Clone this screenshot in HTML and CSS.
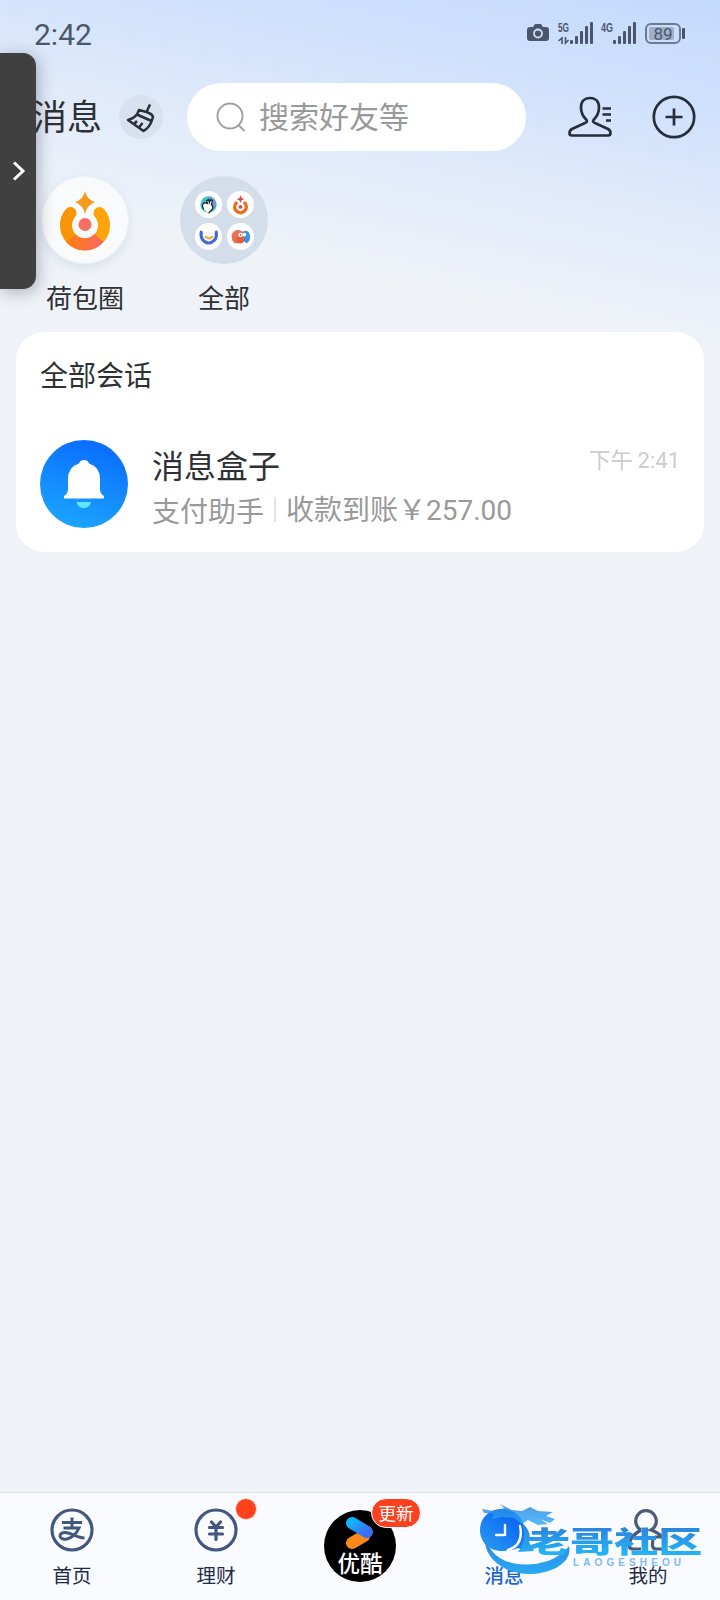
FILE: index.html
```html
<!DOCTYPE html>
<html lang="zh-CN">
<head>
    <meta charset="UTF-8">
    <meta name="viewport" content="width=device-width, initial-scale=1.0">
    <title>消息</title>
    <link rel="stylesheet" href="styles.css">
</head>
<body>
    <div class="status-bar">
        <span class="clock">2:42</span>
        <svg class="status-icons" width="160" height="24" viewBox="0 0 160 24">
            <g fill="#4a566b">
                <path d="M3 5h3l2-3h6l2 3h3q3 0 3 3v8q0 3-3 3H3q-3 0-3-3V8q0-3 3-3z"/>
                <rect x="43" y="18" width="3" height="4" rx="1"/>
                <rect x="48" y="14" width="3" height="8" rx="1"/>
                <rect x="53" y="9" width="3" height="13" rx="1"/>
                <rect x="58" y="4" width="3" height="18" rx="1"/>
                <rect x="63" y="0" width="3" height="22" rx="1"/>
                <rect x="86" y="18" width="3" height="4" rx="1"/>
                <rect x="91" y="14" width="3" height="8" rx="1"/>
                <rect x="96" y="9" width="3" height="13" rx="1"/>
                <rect x="101" y="4" width="3" height="18" rx="1"/>
                <rect x="106" y="0" width="3" height="22" rx="1"/>
                <rect x="155" y="6" width="3" height="11" rx="1"/>
            </g>
            <circle cx="11" cy="11.500" r="4" fill="none" stroke="#cfe0fb" stroke-width="1.800"/>
            <path d="M35 22v-6l-3.500 3M38.500 15v6l3-3" fill="none" stroke="#4a566b" stroke-width="1.600"/>
            <rect x="119" y="2" width="34" height="19" rx="5" fill="none" stroke="#6d7a90" stroke-width="2"/>
            <rect x="122" y="5" width="25" height="13" rx="2" fill="#9fb0ca"/>
            <text class="net" x="31" y="10" textLength="11" lengthAdjust="spacingAndGlyphs">5G</text>
            <text class="net" x="74" y="10" textLength="12" lengthAdjust="spacingAndGlyphs">4G</text>
            <text class="level" x="136" y="17.500" text-anchor="middle">89</text>
        </svg>
    </div>

    <header class="header">
        <h1>消息</h1>
        <div class="clean">
            <svg width="44" height="44" viewBox="0 0 44 44" fill="none" stroke="#2b2e35" stroke-width="2.500" stroke-linejoin="round">
                <path d="M31 9.500L27.500 17M20 15L27.500 17Q33.500 19 34 22L32.500 26L18 19.500z"/>
                <path d="M18 19.500Q14 24 9 25L24.500 36Q31 32 32.500 26M15 29l3-3M20 32.500l3.500-4.500"/>
            </svg>
        </div>
        <div class="search">
            <svg width="32" height="32" viewBox="0 0 32 32" fill="none" stroke="#a0a0a0" stroke-width="2">
                <circle cx="15" cy="15" r="12.500"/>
                <path d="M23.500 24l6 6"/>
            </svg>
            <span>搜索好友等</span>
        </div>
        <svg class="contacts" width="44" height="42" viewBox="0 0 44 42" fill="none" stroke="#262d3b" stroke-width="2.700">
            <path d="M18.500 24C15 20.500 13 17 13 11.500C13 5.500 16.500 2 22 2S31 5.500 31 11.500C31 17 29 20.500 25.500 24Q24 26 27 27L40 33Q42.500 34.500 42.500 37Q42.500 39.500 40 39.500H4Q1.500 39.500 1.500 37Q1.500 34.500 4 33L17 27Q20 26 18.500 24z"/>
            <path d="M34.500 12.500h8.500M34.500 18.500h8.500M38 24.500h5"/>
        </svg>
        <svg class="add" width="44" height="44" viewBox="0 0 44 44" fill="none" stroke="#262d3b" stroke-width="2.700">
            <circle cx="22" cy="22" r="20.200"/>
            <path d="M13.500 22h17M22 13.500v17"/>
        </svg>
    </header>

    <nav class="apps">
        <div class="app">
            <div class="app-icon">
                <svg width="86" height="86" viewBox="0 0 86 86">
                    <defs>
                        <linearGradient id="orange" x1="0" y1="0" x2="1" y2="0">
                            <stop offset="0" stop-color="#f89406"/>
                            <stop offset="1" stop-color="#ffa50a"/>
                        </linearGradient>
                        <linearGradient id="coral" x1="0" y1="0" x2="1" y2="0">
                            <stop offset="0" stop-color="#ff7d14"/>
                            <stop offset="1" stop-color="#f96a5c"/>
                        </linearGradient>
                    </defs>
                    <path d="M28.500 36A19 19 0 1 0 57.500 36" fill="none" stroke="url(#orange)" stroke-width="12" stroke-linecap="round"/>
                    <path d="M28.500 61A19 19 0 0 0 57 61" fill="none" stroke="url(#coral)" stroke-width="12"/>
                    <path d="M43 14Q45 23 53 25Q45 28 43 37Q41 28 33 25Q41 23 43 14z" fill="#f79a1a"/>
                    <circle cx="43" cy="47.500" r="6.500" fill="#f96e62"/>
                </svg>
            </div>
            <span>荷包圈</span>
        </div>
        <div class="app">
            <div class="app-icon all">
                <div class="mini">
                    <svg viewBox="0 0 28 28">
                        <circle cx="14" cy="14" r="8.500" fill="#3fc5bd"/>
                        <path d="M14 6A8.500 8.500 0 0 1 22 14L19 20z" fill="#7893cf"/>
                        <path d="M9 19q-3-5 1-7l3 1l-1-3l2-1l1 3l1-3l2 1l-1 4q3 3 0 6l-3 3" fill="#fff" stroke="#182632" stroke-width="1.300"/>
                    </svg>
                </div>
                <div class="mini">
                    <svg viewBox="0 0 28 28">
                        <path d="M9.500 12.500A6 6 0 1 0 18.500 12.500" fill="none" stroke="#e86e25" stroke-width="3.600" stroke-linecap="round"/>
                        <path d="M14 4.500L15.200 7.300L18 8.500L15.200 9.700L14 12.500L12.800 9.700L10 8.500L12.800 7.300z" fill="#d94d45"/>
                        <circle cx="14" cy="16.500" r="2" fill="#d84d40"/>
                    </svg>
                </div>
                <div class="mini">
                    <svg viewBox="0 0 28 28" fill="none" stroke-linecap="round">
                        <path d="M6.500 9.500Q5.500 14 8 17.500Q14 24 20.500 17.500Q23 14 22 9.500" stroke="#426bd4" stroke-width="3.200"/>
                        <path d="M11 14.500q3.500 3 7 0" stroke="#edae3d" stroke-width="2.400"/>
                    </svg>
                </div>
                <div class="mini">
                    <svg viewBox="0 0 28 28">
                        <path d="M15 21H8Q4 18 5 12Q8 5.500 15 8L18 12z" fill="#e77157"/>
                        <path d="M16 9Q22 6 24 13Q24 20 20 21L16 17z" fill="#3e91d8"/>
                        <circle cx="14" cy="17" r="4" fill="#e45e43"/>
                        <circle cx="14" cy="12.500" r="2.300" fill="#fff"/>
                        <circle cx="18" cy="12" r="2" fill="#fff"/>
                        <circle cx="14" cy="12.500" r="1" fill="#ca5850"/>
                    </svg>
                </div>
            </div>
            <span>全部</span>
        </div>
    </nav>

    <main class="card">
        <h2>全部会话</h2>
        <div class="chat">
            <svg class="avatar" width="88" height="88" viewBox="0 0 88 88">
                <defs>
                    <linearGradient id="blue" x1="0.650" y1="0" x2="0.350" y2="1">
                        <stop offset="0" stop-color="#0a6cff"/>
                        <stop offset="1" stop-color="#1ba5ff"/>
                    </linearGradient>
                </defs>
                <circle cx="44" cy="44" r="44" fill="url(#blue)"/>
                <path d="M36.500 62h14.500a7.300 7 0 0 1-14.500 0z" fill="#5ee7ff"/>
                <path d="M24 56Q28 54 28 49V39Q28 27 39 23.500Q40 20 44 20T49 23.500Q60 27 60 39V49Q60 54 64 56V58.500H24z" fill="#fff"/>
            </svg>
            <div class="chat-text">
                <h3>消息盒子</h3>
                <p><span>支付助手</span><i class="divider"></i><span>收款到账￥<span class="num">257.00</span></span></p>
            </div>
            <time>下午 <span class="num">2:41</span></time>
        </div>
    </main>

    <footer class="tab-bar">
        <div class="tab">
            <svg width="44" height="44" viewBox="0 0 44 44" fill="none" stroke="#42577f">
                <circle cx="22" cy="22" r="20" stroke-width="3.200"/>
                <path d="M12 14.500h20M22 9.500v10M13.500 20H29Q25 29 17 31C8 32.500 8 24 15.500 24.500C22 25 27 30 34.500 30" stroke-width="3"/>
            </svg>
            <span>首页</span>
        </div>
        <div class="tab">
            <svg width="44" height="44" viewBox="0 0 44 44" fill="none" stroke="#42577f">
                <circle cx="22" cy="22" r="20" stroke-width="3.200"/>
                <path d="M17.500 14l4.500 5l4.500-5M15.500 19.500h13M15.500 26h13M22 19v12.500" stroke-width="3.200" stroke-linecap="round"/>
            </svg>
            <span>理财</span>
            <i class="dot"></i>
        </div>
        <div class="tab">
            <div class="youku">
                <svg width="30" height="34" viewBox="0 0 30 34" fill="none" stroke-width="12" stroke-linecap="round">
                    <defs>
                        <linearGradient id="play" x1="0" y1="0" x2="1" y2="1">
                            <stop offset="0" stop-color="#14b0fb"/>
                            <stop offset="1" stop-color="#3c6cf4"/>
                        </linearGradient>
                    </defs>
                    <path d="M7 27L19 20" stroke="#fb8918"/>
                    <path d="M7 7L22 16" stroke="url(#play)"/>
                </svg>
                <b>优酷</b>
            </div>
            <em class="badge">更新</em>
        </div>
        <div class="tab active">
            <svg width="48" height="44" viewBox="0 0 48 44">
                <defs>
                    <linearGradient id="bubble" x1="1" y1="0" x2="0" y2="1">
                        <stop offset="0.300" stop-color="#0d6af3"/>
                        <stop offset="1" stop-color="#2b9ff0"/>
                    </linearGradient>
                </defs>
                <path d="M22 1C35 1 44 10 44 22Q45 30 48 39Q44 43 38 40Q31 43 22 43C9 43 0 34 0 22S9 1 22 1z" fill="url(#bubble)"/>
            </svg>
            <span>消息</span>
        </div>
        <div class="tab">
            <svg width="44" height="44" viewBox="0 0 44 44" fill="none" stroke="#4b5a78" stroke-width="3.200">
                <path d="M15 22A10.300 10.300 0 1 1 25 22Q33 25 36 29M15 22Q4 28 3 37Q3 41 7 41H15M29 29h9M27 32Q25 41 30 41H37"/>
            </svg>
            <span>我的</span>
        </div>

        <div class="watermark">
            <svg width="100" height="82" viewBox="0 0 100 82">
                <defs>
                    <linearGradient id="dragon" x1="0" y1="0" x2="0" y2="1">
                        <stop offset="0" stop-color="#2b83e6"/>
                        <stop offset="1" stop-color="#28a9f2"/>
                    </linearGradient>
                </defs>
                <g fill="url(#dragon)">
                    <path d="M2 10L14 12L24 9L20 5L32 11L42 12L50 8L58 12L73 13L66 17L75 20L70 24L60 20L68 25L58 26L48 21L42 25L34 19L22 18L12 20L14 15L4 14z" opacity="0.800"/>
                    <path d="M5 34Q8 58 32 64Q50 68 68 62Q83 56 89 47Q92 60 76 69Q52 80 28 71Q2 59 5 34z"/>
                    <path d="M42 24Q52 32 49 43L54 52L38 53Q47 42 42 24z"/>
                </g>
                <path d="M16 36h7M25 26v10M28 51Q44 46 40 27" fill="none" stroke="#fff" stroke-width="2.400" stroke-linecap="round"/>
            </svg>
            <strong>老哥社区</strong>
            <small>LAOGESHEOU</small>
        </div>
    </footer>

    <aside class="drawer">
        <svg width="14" height="22" viewBox="0 0 14 22" fill="none" stroke="#fff" stroke-width="3">
            <path d="M2 2.500l9 8.500l-9 8.500"/>
        </svg>
    </aside>
</body>
</html>
```
FILE: styles.css
```css
* {
    box-sizing: border-box;
}
body {
    position: relative;
    display: flex;
    flex-direction: column;
    margin: 0;
    height: 1600px;
    overflow: hidden;
    font-family: "Noto Sans CJK SC", sans-serif;
    font-weight: 400;
    color: #2e3034;
    background: linear-gradient(192deg, #c4dafc 0, #d0e1fc 110px, #e2ebfa 235px, #eff3f8 345px);
}
h1, h2, h3, p {
    margin: 0;
    font-weight: inherit;
}
svg {
    display: block;
    flex: none;
}
.status-bar {
    display: flex;
    justify-content: space-between;
    align-items: center;
    height: 68px;
    padding: 0 33px 0 34px;
}
.clock {
    font-family: Roboto, sans-serif;
    font-size: 30px;
    color: #4b586c;
}
.num {
    font-family: Roboto, sans-serif;
}
.net {
    font: bold 12px "Liberation Sans", sans-serif;
    fill: #4a566b;
}
.level {
    font: 17px Roboto, sans-serif;
    fill: #4a566b;
}
.header {
    display: flex;
    align-items: center;
    height: 98px;
    padding: 0 24px 0 32px;
}
h1 {
    width: 87px;
    padding-bottom: 5px;
    font-size: 35px;
    line-height: 50px;
}
.clean {
    width: 44px;
    height: 44px;
    border-radius: 50%;
    background: #d7e1ef;
}
.search {
    display: flex;
    align-items: center;
    gap: 12px;
    width: 339px;
    height: 68px;
    margin-left: 24px;
    padding-left: 28px;
    border-radius: 34px;
    background: #fff;
    color: #999;
    font-size: 30px;
    line-height: 44px;
}
.search span {
    padding-bottom: 4px;
}
.contacts {
    margin-left: 42px;
}
.add {
    margin-left: auto;
}
.apps {
    display: flex;
    gap: 51px;
    height: 166px;
    padding: 10px 0 0 41px;
}
.app {
    display: flex;
    flex-direction: column;
    align-items: center;
    gap: 14px;
    width: 88px;
    font-size: 26px;
    line-height: 38px;
}
.app-icon {
    width: 88px;
    height: 88px;
    border: 1px solid #eef3f9;
    border-radius: 50%;
    background: #f8fafc;
    box-shadow: 0 4px 10px rgba(100, 125, 160, 0.15);
}
.all {
    display: grid;
    grid-template-columns: 27px 27px;
    gap: 5px;
    place-content: center;
    border: none;
    background: #d4deea;
    box-shadow: none;
}
.mini {
    border-radius: 50%;
    background: #fff;
}
.card {
    width: 688px;
    height: 220px;
    margin: 0 16px;
    padding: 21px 24px 0;
    border-radius: 28px;
    background: #fff;
}
h2 {
    font-size: 28px;
    line-height: 42px;
}
.chat {
    display: flex;
    margin-top: 45px;
}
.chat-text {
    margin-left: 24px;
    padding-top: 2px;
}
h3 {
    font-size: 32px;
    line-height: 44px;
}
.chat p {
    display: flex;
    align-items: center;
    font-size: 28px;
    line-height: 44px;
    color: #999;
}
.divider {
    width: 2px;
    height: 25px;
    margin: 0 10px;
    background: #e3e3e3;
}
.chat time {
    margin-left: auto;
    padding-top: 2px;
    font-size: 22px;
    line-height: 32px;
    color: #ccc;
}
.tab-bar {
    position: relative;
    display: grid;
    grid-template-columns: repeat(5, 144px);
    height: 108px;
    margin-top: auto;
    border-top: 1px solid #dfe3e9;
    background: #f9fbff;
}
.tab {
    position: relative;
    display: flex;
    flex-direction: column;
    align-items: center;
    gap: 9px;
    padding-top: 15px;
    font-size: 19.5px;
    line-height: 28px;
    color: #1f2b47;
}
.active {
    color: #1c65d5;
    font-weight: 500;
}
.dot {
    position: absolute;
    top: 5px;
    left: 91px;
    width: 22px;
    height: 22px;
    border: 1px solid #ffded8;
    border-radius: 50%;
    background: #ff411c;
}
.youku {
    display: flex;
    flex-direction: column;
    align-items: center;
    width: 72px;
    height: 72px;
    margin-top: 2px;
    padding: 6px 0 0 0;
    border-radius: 50%;
    background: #000;
    color: #fff;
}
.youku b {
    font-size: 22.5px;
    font-weight: 500;
    line-height: 24px;
}
.badge {
    position: absolute;
    top: 5px;
    left: 83px;
    width: 50px;
    height: 30px;
    border: 1px solid #fff;
    border-radius: 15px;
    background: #fc4121;
    color: #fff;
    font-size: 17.5px;
    font-style: normal;
    line-height: 27px;
    text-align: center;
}
/* community stamp over the last two tabs */
.watermark {
    position: absolute;
    left: 480px;
    top: 6px;
    width: 240px;
    height: 82px;
}
.watermark strong {
    position: absolute;
    left: 46px;
    top: 23px;
    font-size: 29px;
    font-weight: 900;
    line-height: 36px;
    white-space: nowrap;
    transform: scaleX(1.52);
    transform-origin: left;
    background: linear-gradient(#2d83dc 15%, #22b2f5 85%);
    -webkit-background-clip: text;
    background-clip: text;
    color: transparent;
}
.watermark small {
    position: absolute;
    left: 93px;
    top: 57px;
    font: bold 10px/14px "Liberation Sans", sans-serif;
    letter-spacing: 4.1px;
    color: #7fb9ee;
}
.drawer {
    position: absolute;
    left: 0;
    top: 53px;
    display: flex;
    align-items: center;
    width: 36px;
    height: 236px;
    padding-left: 12px;
    border-radius: 0 13px 13px 0;
    background: #404040;
    box-shadow: 2px 3px 16px rgba(40, 50, 70, 0.35);
}
```
